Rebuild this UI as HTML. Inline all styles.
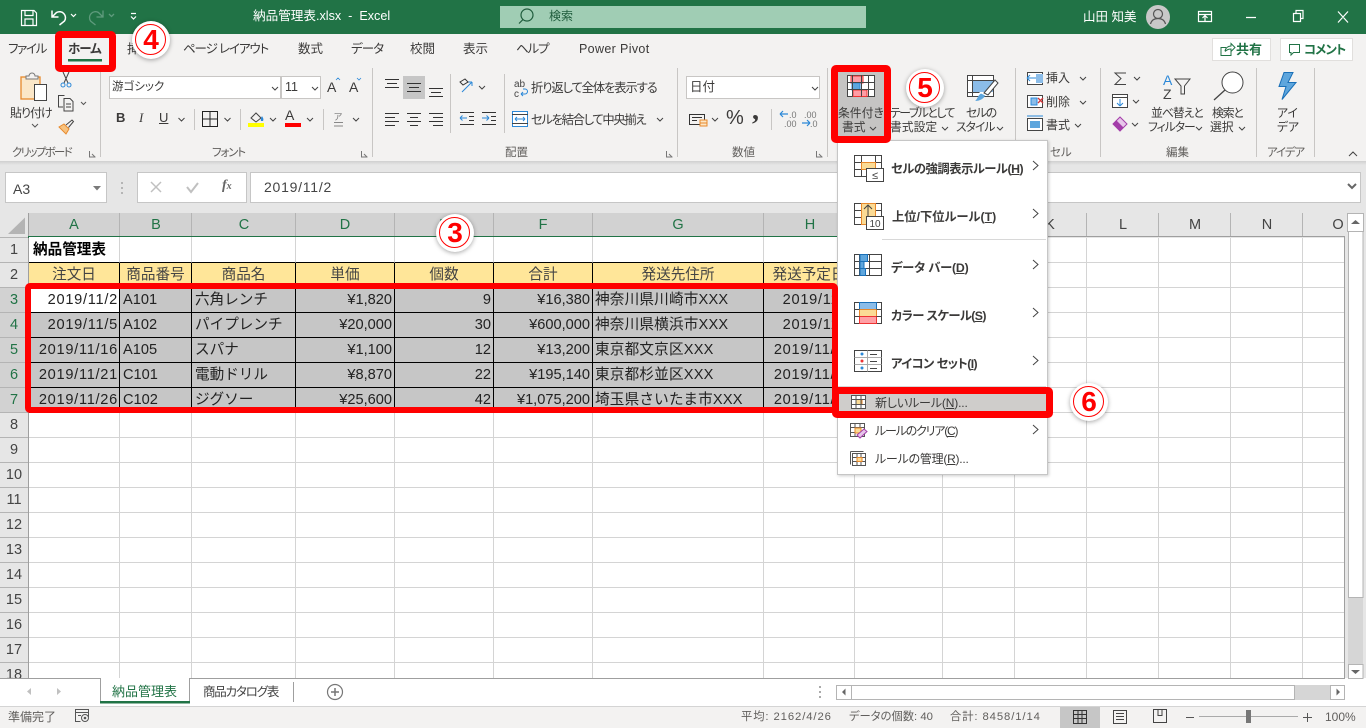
<!DOCTYPE html>
<html lang="ja"><head><meta charset="utf-8"><title>納品管理表.xlsx - Excel</title>
<style>
html,body{margin:0;padding:0;width:1366px;height:728px;overflow:hidden;background:#fff}
body{position:relative;font-family:"Liberation Sans","Noto Sans CJK JP",sans-serif;color:#3b3a39}
div,span,svg,table{position:absolute}
td span,td{position:static}
.t{white-space:nowrap;line-height:20px;font-size:12.5px;font-feature-settings:"palt";color:#3b3a39}
.s{font-size:11.5px;color:#605e5c}
.w{color:#fff}
.b{font-weight:700}
.c{width:40px;text-align:center;font-size:14.5px;line-height:22px;color:#217346}
.g{color:#444}
.n{width:28px;left:0;text-align:center;font-size:14.5px;line-height:24px;color:#444}
.n.a{color:#217346}
.box{background:#fff;border:1px solid #c8c6c4;box-sizing:border-box}
.sep{width:1px;background:#c8c6c4}
.red{border:7px solid #f00;border-radius:5px;box-sizing:border-box}
.o{width:38px;height:38px;border-radius:50%;background:#fff;box-shadow:0 1px 5px rgba(0,0,0,.35);text-align:center;color:#f00;font:700 28px/38px "Liberation Sans",sans-serif}
.o i{position:absolute;left:3px;top:3px;width:29px;height:29px;border:1.5px solid #f00;border-radius:50%}
table{left:29px;top:237px;width:826px;table-layout:fixed;border-collapse:separate;border-spacing:0;font-size:14.6px;color:#222}
td{box-sizing:border-box;height:25px;padding:0 1px 0 3px;border-right:1px solid #000;border-bottom:1px solid #000;white-space:nowrap;overflow:hidden;line-height:22px}
tr.h td{background:#ffe699;text-align:center;padding:0;color:#444}
tr.d td{background:#c6c6c6}
tr.f td{height:26px;border-right-color:#d4d4d4;background:#fff}
td.r{text-align:right;padding-right:2px}
td.dt{text-align:right;letter-spacing:.72px;padding-right:1px}
td.a{letter-spacing:.2px;padding-left:2px}
td.wh{background:#fff!important}
.m{font-size:12.3px}
</style></head><body>

<!-- title bar -->
<div style="left:0;top:0;width:1366px;height:34px;background:#217346"></div>
<div style="left:500px;top:6px;width:366px;height:22px;background:#a0cdb4"></div>
<span class="t" style="left:253px;top:6px;color:#fff;font-size:12.6px">納品管理表.xlsx&nbsp; - &nbsp;Excel</span>
<span class="t" style="left:549px;top:6px;color:#1f5c3c;font-size:12px">検索</span>
<span class="t w" style="left:1083px;top:7px;font-size:12.5px">山田 知美</span>

<!-- ribbon -->
<div style="left:0;top:34px;width:1366px;height:127px;background:#f3f2f1"></div>
<div style="left:0;top:161px;width:1366px;height:52px;background:#e6e6e6"></div>
<div style="left:0;top:161px;width:1366px;height:4px;background:linear-gradient(#cfcfcf,#e6e6e6)"></div>

<span class="t" style="left:8px;top:39px;letter-spacing:-1.3px">ファイル</span>
<span class="t" style="left:183px;top:39px;letter-spacing:-1.1px">ページ レイアウト</span>
<span class="t" style="left:298px;top:39px">数式</span>
<span class="t" style="left:351px;top:39px;letter-spacing:-.9px">データ</span>
<span class="t" style="left:410px;top:39px">校閲</span>
<span class="t" style="left:463px;top:39px">表示</span>
<span class="t" style="left:516px;top:39px;letter-spacing:-1.2px">ヘルプ</span>
<span class="t" style="left:579px;top:39px;letter-spacing:.35px">Power Pivot</span>
<span class="t" style="left:127px;top:39px">挿入</span>

<div class="box" style="left:1212px;top:38px;width:59px;height:23px;border-color:#e1dfdd"></div>
<span class="t b" style="left:1236px;top:40px;color:#217346;font-size:13px">共有</span>
<div class="box" style="left:1280px;top:38px;width:73px;height:23px;border-color:#e1dfdd"></div>
<span class="t b" style="left:1304px;top:40px;color:#217346;font-size:12.5px;letter-spacing:-1px">コメント</span>

<!-- group separators -->
<div class="sep" style="left:100px;top:68px;height:89px"></div>
<div class="sep" style="left:372px;top:68px;height:89px"></div>
<div class="sep" style="left:677px;top:68px;height:89px"></div>
<div class="sep" style="left:827px;top:68px;height:89px"></div>
<div class="sep" style="left:1015px;top:68px;height:89px"></div>
<div class="sep" style="left:1100px;top:68px;height:89px"></div>
<div class="sep" style="left:1256px;top:68px;height:89px"></div>
<div class="sep" style="left:1314px;top:68px;height:89px"></div>
<div class="sep" style="left:194px;top:109px;height:21px"></div>
<div class="sep" style="left:240px;top:109px;height:21px"></div>
<div class="sep" style="left:323px;top:109px;height:21px"></div>
<div class="sep" style="left:504px;top:74px;height:59px"></div>
<div class="sep" style="left:771px;top:109px;height:21px"></div>
<div class="sep" style="left:450px;top:74px;height:59px"></div>

<!-- group labels -->
<span class="t s" style="left:12px;top:143px;letter-spacing:-1.7px">クリップボード</span>
<span class="t s" style="left:212px;top:143px;letter-spacing:-1.2px">フォント</span>
<span class="t s" style="left:505px;top:143px">配置</span>
<span class="t s" style="left:732px;top:143px">数値</span>
<span class="t s" style="left:1050px;top:143px">セル</span>
<span class="t s" style="left:1166px;top:143px">編集</span>
<span class="t s" style="left:1267px;top:143px;letter-spacing:-1.2px">アイデア</span>

<!-- clipboard -->
<span class="t" style="left:10px;top:103px;font-size:12px;letter-spacing:-1px">貼り付け</span>

<!-- font -->
<div class="box" style="left:109px;top:76px;width:172px;height:23px"></div>
<div class="box" style="left:281px;top:76px;width:40px;height:23px"></div>
<span class="t" style="left:112px;top:77px;font-size:11.5px">游ゴシック</span>
<span class="t" style="left:285px;top:77px;font-size:12.5px">11</span>
<span class="t b" style="left:116px;top:108px;font-size:13px">B</span>
<span class="t" style="left:139px;top:108px;font-size:13px;font-style:italic;font-family:'Liberation Serif',serif">I</span>
<span class="t" style="left:159px;top:108px;font-size:13px;text-decoration:underline">U</span>
<span class="t" style="left:327px;top:77px;font-size:14px">A</span>
<span class="t" style="left:349px;top:77px;font-size:14px">A</span>
<span class="t" style="left:285px;top:105px;font-size:14px">A</span>

<!-- alignment / wrap -->
<div style="left:403px;top:76px;width:22px;height:23px;background:#c6c6c6"></div>
<span class="t" style="left:531px;top:78px;font-size:12.3px;letter-spacing:-1.1px">折り返して全体を表示する</span>
<span class="t" style="left:531px;top:110px;font-size:12.3px;letter-spacing:-1.3px">セルを結合して中央揃え</span>

<!-- number -->
<div class="box" style="left:686px;top:76px;width:134px;height:23px"></div>
<span class="t" style="left:690px;top:77px;font-size:12.5px">日付</span>
<span class="t" style="left:726px;top:108px;font-size:20px">%</span>
<span class="t b" style="left:752px;top:101px;font-size:28px;font-family:'Liberation Serif',serif">,</span>

<!-- cond format button -->
<div style="left:838px;top:72px;width:46px;height:65px;background:#c5c4c3"></div>
<span class="t" style="left:838px;top:103px;font-size:11.8px">条件付き</span>
<span class="t" style="left:842px;top:117px;font-size:11.8px">書式</span>
<span class="t" style="left:890px;top:103px;font-size:11.8px;letter-spacing:-1.4px">テーブルとして</span>
<span class="t" style="left:890px;top:117px;font-size:11.8px">書式設定</span>
<span class="t" style="left:966px;top:103px;font-size:11.8px;letter-spacing:-1.2px">セルの</span>
<span class="t" style="left:956px;top:117px;font-size:11.8px;letter-spacing:-1px">スタイル</span>

<!-- cells / editing -->
<span class="t" style="left:1046px;top:68px;font-size:12px">挿入</span>
<span class="t" style="left:1046px;top:92px;font-size:12px">削除</span>
<span class="t" style="left:1046px;top:115px;font-size:12px">書式</span>
<span class="t" style="left:1151px;top:103px;font-size:11.8px;letter-spacing:-1px">並べ替えと</span>
<span class="t" style="left:1148px;top:117px;font-size:11.8px;letter-spacing:-1px">フィルター</span>
<span class="t" style="left:1212px;top:103px;font-size:11.8px;letter-spacing:-1.1px">検索と</span>
<span class="t" style="left:1210px;top:117px;font-size:11.8px">選択</span>
<span class="t" style="left:1277px;top:103px;font-size:11.8px">アイ</span>
<span class="t" style="left:1277px;top:117px;font-size:11.8px">デア</span>

<!-- formula bar -->
<div class="box" style="left:5px;top:172px;width:102px;height:31px;border-color:#c6c6c6"></div>
<span class="t" style="left:13px;top:179px;font-size:14px;color:#444">A3</span>
<div class="box" style="left:137px;top:172px;width:110px;height:31px;border-color:#c6c6c6"></div>
<div class="box" style="left:250px;top:172px;width:1111px;height:31px;border-color:#c6c6c6"></div>
<span class="t" style="left:264px;top:177px;font-size:14px;color:#444;letter-spacing:.75px">2019/11/2</span>
<span class="t" style="left:222px;top:176px;font:italic 700 14px/20px 'Liberation Serif',serif;color:#666">f<span style="position:static;font-size:10px">x</span></span>

<!-- sheet headers -->
<div style="left:0;top:213px;width:1366px;height:465px;background:#e6e6e6"></div>
<div style="left:28px;top:213px;width:810px;height:24px;background:#d2d2d2"></div>
<div style="left:0;top:287px;width:28px;height:125px;background:#d2d2d2"></div>
<div style="left:29px;top:238px;width:1315px;height:440px;background:#fff"></div>

<svg style="left:0;top:0" width="1366" height="728" viewBox="0 0 1366 728" fill="none">
 <!-- grid -->
 <path stroke="#d4d4d4" d="M29 262.5H1344M29 287.5H1344M29 312.5H1344M29 337.5H1344M29 362.5H1344M29 387.5H1344M29 412.5H1344M29 437.5H1344M29 462.5H1344M29 487.5H1344M29 512.5H1344M29 537.5H1344M29 562.5H1344M29 587.5H1344M29 612.5H1344M29 637.5H1344M29 662.5H1344"/>
 <path stroke="#d4d4d4" d="M119.5 238V678M191.5 238V678M295.5 238V678M394.5 238V678M493.5 238V678M592.5 238V678M763.5 238V678M854.5 238V678M942.5 238V678M1014.5 238V678M1086.5 238V678M1158.5 238V678M1230.5 238V678M1302.5 238V678"/>
 <!-- header lines -->
 <path stroke="#b4b4b4" d="M119.5 213V237M191.5 213V237M295.5 213V237M394.5 213V237M493.5 213V237M592.5 213V237M763.5 213V237M1014.5 213V237M1086.5 213V237M1158.5 213V237M1230.5 213V237M1302.5 213V237"/>
 <path stroke="#b4b4b4" d="M0 237.5H28M0 262.5H28M0 287.5H28M0 312.5H28M0 337.5H28M0 362.5H28M0 387.5H28M0 412.5H28M0 437.5H28M0 462.5H28M0 487.5H28M0 512.5H28M0 537.5H28M0 562.5H28M0 587.5H28M0 612.5H28M0 637.5H28M0 662.5H28"/>
 <path stroke="#9f9f9f" d="M28.5 213V678M1344.5 236V678M838 236.5H1344M0 678.5H1345"/>
 <rect x="28" y="236" width="810" height="2" fill="#217346"/>
 <path fill="#b4b4b4" d="M8 234L25 217.500V234z"/>
 <!-- formula bar glyphs -->
 <path fill="#7a7a7a" d="M93 186h8l-4 4.500z"/>
 <path stroke="#b5b5b5" stroke-width="2" stroke-dasharray="2 3" d="M122 182V197"/>
 <path stroke="#c0c0c0" stroke-width="1.500" d="M151 182l10 10M161 182l-10 10"/>
 <path stroke="#c0c0c0" stroke-width="2" d="M187 187l4 5 7-9"/>
 <path stroke="#666" stroke-width="2" d="M1348 184l4 4 4-4"/>
 <!-- scrollbar right -->
 <rect x="1347.500" y="213.500" width="16" height="18" fill="#fff" stroke="#b4b4b4"/>
 <path fill="#666" d="M1351 224l4.500-4 4.500 4z"/>
 <rect x="1348" y="232" width="15" height="432" fill="#d6d6d6"/>
 <rect x="1348.500" y="231.500" width="14.500" height="366" fill="#fff" stroke="#b4b4b4"/>
 <rect x="1348.500" y="664.500" width="14.500" height="14" fill="#fff" stroke="#b4b4b4"/>
 <path fill="#666" d="M1351 670h9l-4.500 4z"/>

 <!-- title bar icons -->
 <g stroke="#fff" stroke-width="1.200">
  <path d="M21.500 10.500h12.500l2.500 2.500v12.500h-15zM25 10.500v5h8v-5M25 25.500v-6.500h8v6.500"/>
  <path stroke-width="1.500" d="M52 10.500v6.500h6.500M52.500 16.500l4-4a6 6 0 0 1 8 8.500l-5 4"/>
  <path d="M71 14l2.500 2.500 2.500-2.500M131 13.500h5M131 16.500l2.500 2.500 2.500-2.500"/>
  <path d="M1198.500 11.500h13v10h-13zM1198.500 14.500h13M1205 21v-5M1202.500 18l2.500-2.500 2.500 2.500M1246 17.500h10M1293.500 13.500h7v8h-7zM1296 13v-2.500h7v8h-2.500M1338 11.500l10 11M1348 11.500l-10 11"/>
 </g>
 <g stroke="#5f9b7d" stroke-width="1.300">
  <path d="M103 10.500v6.500h-6.500M102.500 16.500l-4-4a6 6 0 0 0-8 8.500l5 4"/>
  <path d="M109 14l2.500 2.500 2.500-2.500"/>
 </g>
 <circle cx="1158" cy="17" r="12" fill="#c8c8c8"/>
 <circle cx="1158" cy="14" r="4.500" stroke="#555" stroke-width="1.200"/>
 <path stroke="#555" stroke-width="1.200" d="M1150.500 24c1-4 4-5.500 7.500-5.500s6.500 1.500 7.500 5.500"/>
 <circle cx="527" cy="15" r="6" stroke="#1f5c3c" stroke-width="1.200"/>
 <path stroke="#1f5c3c" stroke-width="1.200" d="M523 19.500l-4 4"/>

 <!-- share / comment -->
 <path stroke="#217346" d="M1226 47.500h-5v8h10v-4M1225 51c.5-3 3-5 6-5v-2.500l4 4-4 4v-2.500c-2.500 0-4.500 1-6 2.500"/>
 <path stroke="#217346" d="M1289.500 44.500h10v8h-6l-2.500 2.500v-2.500h-1.500z"/>

 <!-- home underline -->
 <rect x="68" y="59" width="34" height="2.500" fill="#217346"/>

 <!-- paste -->
 <rect x="21" y="77" width="19" height="22" fill="#fbe7c8" stroke="#e8892b" stroke-width="1.300"/>
 <path stroke="#777" fill="#f3f2f1" d="M26 79v-3h3a3 3 0 0 1 6 0h3v3z"/>
 <rect x="34.500" y="84.500" width="12" height="16" fill="#fff" stroke="#444"/>
 <path stroke="#555" d="M56 102l3 3 3-3" transform="translate(-24 22)"/>
 <!-- scissors -->
 <path stroke="#444" d="M63 72l5 11M69 72l-5 11"/>
 <circle cx="63" cy="85" r="2" stroke="#2b88d8"/><circle cx="69" cy="85" r="2" stroke="#2b88d8"/>
 <!-- copy -->
 <path stroke="#444" d="M63 107h-4.500V95.500h6M64 98.500h6l3 3v9.500h-9zM66 104h5M66 107h5"/>
 <path stroke="#555" d="M81 102l2.500 2.500 2.500-2.500"/>
 <!-- brush -->
 <path fill="#f7c27f" stroke="#e8892b" d="M59 127l5-3 5 5-3 5z"/>
 <path stroke="#444" d="M66 125l6-5 1.500 1.500-5 6"/>

 <!-- chevrons font -->
 <g stroke="#444">
  <path d="M272 87l3 3 3-3M312 87l3 3 3-3M178.500 118l3 3 3-3M224.500 118l3 3 3-3M270 118l3 3 3-3M307 118l3 3 3-3M353 118l3 3 3-3M479 86l3 3 3-3M657 118l3 3 3-3M812 87l3 3 3-3M712 118l3 3 3-3M870 127l3 3 3-3M942 127l3 3 3-3M997 127l3 3 3-3M1080 77l3 3 3-3M1080 101l3 3 3-3M1075 124l3 3 3-3M1134 77l3 3 3-3M1133 100l3 3 3-3M1132 123l3 3 3-3M1196 127l3 3 3-3M1239 127l3 3 3-3M1349 156l4-4 4 4"/>
  <path stroke="#999" d="M1 0" />
 </g>
 <path stroke="#2b88d8" stroke-width=".8" d="M336 80l2-2 2 2M357 78l2 2 2-2"/>
 <path stroke="#222" d="M202.500 111.500h15v15h-15zM210 111v15M202 119h15"/>
 <!-- fill -->
 <path stroke="#444" d="M251 118l5-5 5 5-5 4z"/>
 <path fill="#2b88d8" d="M262 116c1 2 2 3 1 5h-2c-.5-2 0-3 1-5z"/>
 <rect x="248" y="123" width="16" height="4" fill="#ff0"/>
 <rect x="285" y="123" width="16" height="4" fill="#f00"/>
 <path stroke="#888" d="M334 122.500h9M334 126h9"/>
 <text x="338" y="120" font-size="9" fill="#777" text-anchor="middle" font-family="Noto Sans CJK JP">ア</text>

 <!-- alignment icons -->
 <path stroke="#333" d="M385 79.500h14M387 83.500h10M385 87.500h14M407 83.500h14M409 87.500h10M407 91.500h14M429 88.500h14M431 92.500h10M429 96.500h14"/>
 <path stroke="#333" d="M385 113.500h14M385 117.500h10M385 121.500h14M385 125.500h10M407 113.500h14M410 117.500h8M407 121.500h14M410 125.500h8M429 113.500h14M433 117.500h10M429 121.500h14M433 125.500h10"/>
 <path stroke="#2b88d8" d="M462 92l10-10M472 82h-4M472 82v4M460 118h7M460 118l2.500-2.500M460 118l2.500 2.500M482 118h7M489 118l-2.500-2.500M489 118l-2.500 2.500"/>
 <path stroke="#333" d="M460 82l5-3 3 3-5 3zM460 112.500h14M469 116.500h5M469 120.500h5M460 124.500h14M482 112.500h14M491 116.500h5M491 120.500h5M482 124.500h14"/>
 <!-- wrap icon -->
 <text x="514" y="87" font-size="10" fill="#444" font-family="Liberation Sans">ab</text>
 <text x="514" y="97" font-size="10" fill="#444" font-family="Liberation Sans">c</text>
 <path stroke="#2b88d8" d="M521 94h4a2.500 2.500 0 0 0 0-5h-2M521 94l2-2M521 94l2 2"/>
 <!-- merge icon -->
 <rect x="512.500" y="111.500" width="15" height="15" fill="#fff" stroke="#2b88d8"/>
 <path stroke="#444" d="M512 114.500h16M512 123.500h16"/>
 <path stroke="#2b88d8" d="M515 119h10M515 119l2-2M515 119l2 2M525 119l-2-2M525 119l-2 2"/>
 <!-- number icons -->
 <rect x="689.500" y="114.500" width="15" height="10" stroke="#333"/>
 <path stroke="#333" d="M692 117.500h10M692 120.500h5"/>
 <rect x="700" y="120" width="7" height="6" fill="#fbe7c8" stroke="#e8892b"/>
 <path stroke="#e8892b" d="M700 123h7"/>
 <text x="789" y="118" font-size="9" fill="#777" font-family="Liberation Sans">.0</text>
 <text x="784" y="127" font-size="9" fill="#777" font-family="Liberation Sans">.00</text>
 <text x="804" y="118" font-size="9" fill="#777" font-family="Liberation Sans">.00</text>
 <text x="810" y="127" font-size="9" fill="#777" font-family="Liberation Sans">.0</text>
 <path stroke="#2b88d8" stroke-width="1.200" d="M780 114h8M780 114l3-3M780 114l3 3M802 123h8M810 123l-3-3M810 123l-3 3"/>

 <!-- cond format icon -->
 <rect x="847.500" y="75.500" width="27" height="21" fill="#fff" stroke="#444"/>
 <rect x="851" y="76" width="12" height="7" fill="#ff9da5" stroke="#e33"/>
 <rect x="852" y="83" width="8" height="7" fill="#5ea6dd" stroke="#2b88d8"/>
 <rect x="853" y="90" width="14" height="6.500" fill="#ff9da5" stroke="#e33"/>
 <path stroke="#444" d="M847.500 82.500h27M847.500 89.500h27M852.500 75.500v21M861.500 75.500v21M868.500 75.500v21"/>

 <!-- cell style -->
 <rect x="967.500" y="75.500" width="26" height="21" fill="#fff" stroke="#444"/>
 <rect x="972" y="80" width="21" height="12" fill="#8bbce8"/>
 <path stroke="#444" d="M967.500 80.500h26M967.500 92.500h12M972.500 75.500v21"/>
 <path stroke="#444" fill="#fff" d="M984 93l11-13 3 3-10 12z"/>
 <path fill="#5ea6dd" d="M975 101c2-1 3-6 6-7.500l4 2c-1 3-5 5.500-10 5.500z"/>

 <!-- cells group -->
 <rect x="1027.500" y="72.500" width="15" height="12" fill="#fff" stroke="#444"/>
 <path stroke="#2b88d8" d="M1027 78h10M1027 78l3-3M1027 78l3 3"/><rect x="1036" y="74" width="7" height="9" fill="#8bbce8"/>
 <rect x="1027.500" y="95.500" width="15" height="12" fill="#fff" stroke="#444"/>
 <rect x="1031" y="98" width="6" height="7" fill="#8bbce8" stroke="#2b88d8"/>
 <path stroke="#d13438" stroke-width="1.300" d="M1038 98l5 5M1043 98l-5 5"/>
 <rect x="1027.500" y="118.500" width="15" height="12" fill="#fff" stroke="#444"/>
 <rect x="1030" y="121" width="10" height="7" fill="#5ea6dd"/>
 <path stroke="#2b88d8" d="M1027 116h16"/>
 <!-- edit group -->
 <path stroke="#444" d="M1126 73h-11l6 5.500-6 6h11"/>
 <rect x="1112.500" y="94.500" width="15" height="13" fill="#fff" stroke="#444"/>
 <path stroke="#444" d="M1112 97.500h16"/>
 <path stroke="#2b88d8" d="M1120 99v7M1120 106l-3-3M1120 106l3-3"/>
 <path fill="#e7c6ea" stroke="#a33da9" d="M1113 124l7-7 7 7-7 7z"/>
 <path fill="#a33da9" d="M1113 124l3.500-3.500 7 7-3.500 3.500z"/>
 <!-- sort -->
 <text x="1163" y="85" font-size="14" fill="#2b88d8" font-family="Liberation Sans">A</text>
 <text x="1163" y="99" font-size="14" fill="#444" font-family="Liberation Sans">Z</text>
 <path stroke="#444" d="M1175 79h15l-5.500 7v8l-3.500 0v-8z"/>
 <!-- find -->
 <circle cx="1232.500" cy="82.500" r="10.500" stroke="#444" fill="#fff"/>
 <path stroke="#444" stroke-width="1.300" d="M1225 90l-11 10"/>
 <!-- ideas -->
 <path fill="#5ea6dd" stroke="#1a70b8" d="M1284 72.500h9l-5 10h8l-14 17 4-13h-7z"/>

 <!-- launchers -->
 <path stroke="#777" d="M89.500 151v6h6M92 154l3 3M361.500 151v6h6M364 154l3 3M666.500 151v6h6M669 154l3 3M816.500 151v6h6M819 154l3 3"/>

 <!-- tabs -->
 <rect x="100" y="678" width="89" height="24" fill="#fff"/>
 <path stroke="#9f9f9f" d="M100.500 678v24M189.500 678v24M293.500 682v20"/>
 <rect x="100" y="701" width="90" height="2.500" fill="#217346"/>
 <path fill="#c0c0c0" d="M31 688v7l-4-3.500zM57 688v7l4-3.500z"/>
 <circle cx="335" cy="692" r="7.500" stroke="#777" stroke-width="1.200"/>
 <path stroke="#777" stroke-width="1.500" d="M331 692h8M335 688v8"/>
 <!-- h scroll -->
 <path stroke="#aaa" stroke-width="2" stroke-dasharray="2 3" d="M820 686V700"/>
 <rect x="836.500" y="685" width="508" height="15" fill="#d6d6d6"/>
 <rect x="851.500" y="685.500" width="443" height="14" fill="#fff" stroke="#b4b4b4"/>
 <rect x="836.500" y="685.500" width="15" height="14" fill="#fff" stroke="#b4b4b4"/>
 <rect x="1330.500" y="685.500" width="14" height="14" fill="#fff" stroke="#b4b4b4"/>
 <path fill="#666" d="M845.500 688.500v7l-3.500-3.500zM1336.500 688.500v7l3.500-3.500z"/>
</svg>

<!-- column letters -->
<span class="c" style="left:54px;top:214px">A</span>
<span class="c" style="left:136px;top:214px">B</span>
<span class="c" style="left:224px;top:214px">C</span>
<span class="c" style="left:325px;top:214px">D</span>
<span class="c" style="left:424px;top:214px">E</span>
<span class="c" style="left:523px;top:214px">F</span>
<span class="c" style="left:658px;top:214px">G</span>
<span class="c" style="left:790px;top:214px">H</span>
<span class="c g" style="left:1030px;top:214px">K</span>
<span class="c g" style="left:1103px;top:214px">L</span>
<span class="c g" style="left:1175px;top:214px">M</span>
<span class="c g" style="left:1247px;top:214px">N</span>
<span class="c g" style="left:1318px;top:214px">O</span>

<!-- row numbers -->
<span class="n" style="top:238px">1</span><span class="n" style="top:263px">2</span>
<span class="n a" style="top:288px">3</span><span class="n a" style="top:313px">4</span><span class="n a" style="top:338px">5</span><span class="n a" style="top:363px">6</span><span class="n a" style="top:388px">7</span>
<span class="n" style="top:413px">8</span><span class="n" style="top:438px">9</span><span class="n" style="top:463px">10</span><span class="n" style="top:488px">11</span><span class="n" style="top:513px">12</span><span class="n" style="top:538px">13</span><span class="n" style="top:563px">14</span><span class="n" style="top:588px">15</span><span class="n" style="top:613px">16</span><span class="n" style="top:638px">17</span><span class="n" style="top:663px;height:15px;overflow:hidden">18</span>

<!-- data -->
<table>
<colgroup><col style="width:91px"><col style="width:72px"><col style="width:104px"><col style="width:99px"><col style="width:99px"><col style="width:99px"><col style="width:171px"><col style="width:91px"></colgroup>
<tr class="f"><td class="b" style="color:#000;padding-left:4px">納品管理表</td><td></td><td></td><td></td><td></td><td></td><td></td><td></td></tr>
<tr class="h"><td>注文日</td><td>商品番号</td><td>商品名</td><td>単価</td><td>個数</td><td>合計</td><td>発送先住所</td><td>発送予定日</td></tr>
<tr class="d"><td class="dt wh">2019/11/2</td><td>A101</td><td>六角レンチ</td><td class="r">¥1,820</td><td class="r">9</td><td class="r">¥16,380</td><td class="a">神奈川県川崎市XXX</td><td class="dt">2019/11/5</td></tr>
<tr class="d"><td class="dt">2019/11/5</td><td>A102</td><td>パイプレンチ</td><td class="r">¥20,000</td><td class="r">30</td><td class="r">¥600,000</td><td class="a">神奈川県横浜市XXX</td><td class="dt">2019/11/8</td></tr>
<tr class="d"><td class="dt">2019/11/16</td><td>A105</td><td>スパナ</td><td class="r">¥1,100</td><td class="r">12</td><td class="r">¥13,200</td><td class="a">東京都文京区XXX</td><td class="dt">2019/11/19</td></tr>
<tr class="d"><td class="dt">2019/11/21</td><td>C101</td><td>電動ドリル</td><td class="r">¥8,870</td><td class="r">22</td><td class="r">¥195,140</td><td class="a">東京都杉並区XXX</td><td class="dt">2019/11/24</td></tr>
<tr class="d"><td class="dt">2019/11/26</td><td>C102</td><td>ジグソー</td><td class="r">¥25,600</td><td class="r">42</td><td class="r">¥1,075,200</td><td class="a">埼玉県さいたま市XXX</td><td class="dt">2019/11/29</td></tr>
</table>

<!-- tabs text -->
<span class="t" style="left:112px;top:682px;font-size:13px;color:#217346;font-feature-settings:normal">納品管理表</span>
<span class="t" style="left:203px;top:682px;font-size:12.5px;color:#444;letter-spacing:-1.2px">商品カタログ表</span>

<!-- status bar -->
<div style="left:0;top:706px;width:1366px;height:22px;background:#f3f2f1;border-top:1px solid #d4d4d4;box-sizing:border-box"></div>
<div style="left:1060px;top:707px;width:40px;height:21px;background:#c6c6c6"></div>
<span class="t s" style="left:8px;top:707px;font-size:12px">準備完了</span>
<span class="t s" style="left:741px;top:707px;font-size:11.3px;letter-spacing:.9px">平均: 2162/4/26</span>
<span class="t s" style="left:849px;top:707px;font-size:11.3px">データの個数: 40</span>
<span class="t s" style="left:950px;top:707px;font-size:11.3px;letter-spacing:.9px">合計: 8458/1/14</span>
<span class="t s" style="left:1325px;top:707px;font-size:12px">100%</span>
<svg style="left:0;top:700px" width="1366" height="28" viewBox="0 700 1366 28" fill="none">
 <path stroke="#555" d="M88.500 717v-7.500h-13v12h5M75.500 712.500h13M78 715.500h3"/>
 <circle cx="85" cy="718" r="3.500" stroke="#555"/><circle cx="85" cy="718" r="1.300" fill="#555"/>
 <path stroke="#333" d="M1073.500 710.500h13v13h-13zM1073.500 714.500h13M1073.500 718.500h13M1078 710.500v13M1082 710.500v13"/>
 <path stroke="#444" d="M1113.500 710.500h13v13h-13zM1116 713.500h8M1116 716.500h8M1116 719.500h8M1153.500 709.500h13v13h-13zM1158 709.500v6h4v-6"/>
 <path stroke="#555" d="M1186 717.500h8M1303 717.500h9M1307.500 713v9"/>
 <path stroke="#aaa" d="M1199 716.500h99"/>
 <rect x="1246" y="710" width="5" height="13" fill="#777"/>
</svg>

<!-- conditional format menu -->
<div style="left:837px;top:140px;width:211px;height:335px;background:#fff;border:1px solid #c6c6c6;box-sizing:border-box;box-shadow:1px 1px 3px rgba(0,0,0,.2)"></div>
<div style="left:882px;top:239px;width:164px;height:1px;background:#d8d8d8"></div>
<div style="left:838px;top:386px;width:208px;height:1px;background:#d8d8d8"></div>
<div style="left:838px;top:393px;width:208px;height:19px;background:#cfcdcb"></div>
<span class="t b m" style="left:891px;top:159px;letter-spacing:-.45px">セルの強調表示ルール(<u>H</u>)</span>
<span class="t b m" style="left:892px;top:207px">上位/下位ルール(<u>T</u>)</span>
<span class="t b m" style="left:891px;top:258px;letter-spacing:-.2px">データ バー(<u>D</u>)</span>
<span class="t b m" style="left:891px;top:306px;letter-spacing:-.6px">カラー スケール(<u>S</u>)</span>
<span class="t b m" style="left:891px;top:354px;letter-spacing:-.6px">アイコン セット(<u>I</u>)</span>
<span class="t m" style="left:875px;top:393px;font-size:12px;letter-spacing:-.15px">新しいルール(<u>N</u>)...</span>
<span class="t m" style="left:875px;top:421px;font-size:12px;letter-spacing:-1.2px">ルールのクリア(<u>C</u>)</span>
<span class="t m" style="left:875px;top:449px;font-size:12px;letter-spacing:-.25px">ルールの管理(<u>R</u>)...</span>
<svg style="left:0;top:0" width="1366" height="728" viewBox="0 0 1366 728" fill="none">
 <!-- item 1 -->
 <g stroke="#444">
  <rect x="854.500" y="155.500" width="27" height="21" fill="#fff"/>
  <path d="M854.500 162.500h27M854.500 169.500h27M861.500 155.500v21M875.500 155.500v21"/>
  <rect x="861.500" y="162.500" width="14" height="7" fill="#fbdb95" stroke="#e8892b"/>
  <rect x="866.500" y="168.500" width="17" height="13" fill="#fff"/>
 </g>
 <text x="875" y="179" font-size="11" fill="#444" text-anchor="middle" font-family="Liberation Sans">≤</text>
 <!-- item 2 -->
 <g stroke="#444">
  <rect x="854.500" y="203.500" width="27" height="21" fill="#fff"/>
  <path d="M854.500 210.500h27M854.500 217.500h27M861.500 203.500v21M875.500 203.500v21"/>
  <rect x="861.500" y="203.500" width="14" height="21" fill="#fbdb95" stroke="#e8892b"/>
  <path d="M868 218v-13M864 209l4-4 4 4"/>
  <rect x="866.500" y="216.500" width="17" height="13" fill="#fff"/>
 </g>
 <text x="875" y="227" font-size="10" fill="#444" text-anchor="middle" font-family="Liberation Sans">10</text>
 <!-- item 3 -->
 <rect x="854.500" y="254.500" width="27" height="21" fill="#fff" stroke="#444"/>
 <path stroke="#444" d="M854.500 261.500h27M854.500 268.500h27M859.500 254.500v21M869.500 254.500v21"/>
 <rect x="860" y="254.500" width="7.500" height="7" fill="#5ea6dd" stroke="#1a70b8"/>
 <rect x="860" y="261.500" width="4" height="7" fill="#5ea6dd" stroke="#1a70b8"/>
 <rect x="860" y="268.500" width="5.500" height="7" fill="#5ea6dd" stroke="#1a70b8"/>
 <!-- item 4 -->
 <rect x="854.500" y="302.500" width="27" height="21" fill="#fff" stroke="#444"/>
 <rect x="859.500" y="302.500" width="17" height="7" fill="#8bbce8" stroke="#1a70b8"/>
 <rect x="859.500" y="309.500" width="17" height="7" fill="#fbdb95" stroke="#e8892b"/>
 <rect x="859.500" y="316.500" width="17" height="7" fill="#ffa0a5" stroke="#e33"/>
 <path stroke="#444" d="M854.500 309.500h5M854.500 316.500h5M876.500 309.500h5M876.500 316.500h5"/>
 <!-- item 5 -->
 <rect x="854.500" y="350.500" width="27" height="21" fill="#fff" stroke="#444"/>
 <path stroke="#aaa" d="M854.500 357.500h27M854.500 364.500h27M867.500 350.500v21"/>
 <path stroke="#444" d="M870 354.500h7M870 361.500h7M870 368.500h7"/>
 <circle cx="862" cy="354" r="1.500" fill="#2b88d8"/><circle cx="862" cy="361" r="1.500" fill="#e33"/><circle cx="862" cy="368" r="1.500" fill="#2b88d8"/>
 <!-- lower icons -->
 <rect x="851.500" y="395.500" width="14" height="13" fill="#fff" stroke="#555"/>
 <rect x="856" y="399.500" width="6" height="5" fill="#fbdb95" stroke="#e8892b"/>
 <path stroke="#555" d="M851.500 399.500h14M851.500 404.500h14M856 395.500v13M861 395.500v13"/>
 <rect x="850.500" y="423.500" width="14" height="13" fill="#fff" stroke="#555"/>
 <path stroke="#555" d="M850.500 427.500h14M850.500 432.500h14M855 423.500v13M860 423.500v13"/>
 <rect x="855" y="428" width="6" height="5" fill="#fbdb95" stroke="#e8892b"/>
 <path fill="#e7c6ea" stroke="#a33da9" d="M857 435l7-6 3 2.500-7 6.500z"/>
 <path stroke="#555" d="M850.500 451.500h13M850.500 451.500v13"/>
 <rect x="852.500" y="453.500" width="13" height="12" fill="#fff" stroke="#555"/>
 <path stroke="#555" d="M852.500 457.500h13M852.500 461.500h13M857 453.500v12M861 453.500v12"/>
 <rect x="857" y="457.500" width="5" height="4" fill="#fbdb95" stroke="#e8892b"/>
 <!-- menu chevrons -->
 <path stroke="#444" d="M1033 161l5 4.500-5 4.500M1033 209l5 4.500-5 4.500M1033 260l5 4.500-5 4.500M1033 308l5 4.500-5 4.500M1033 356l5 4.500-5 4.500M1033 425l5 4.500-5 4.500"/>
</svg>

<!-- red annotation boxes -->
<div class="red" style="left:25px;top:283px;width:813px;height:130px;border-width:6.500px"></div>
<div class="red" style="left:55px;top:31px;width:61px;height:41px"></div>
<span class="t b" style="left:68px;top:39px;font-size:12.5px;letter-spacing:-1px">ホーム</span>
<div class="red" style="left:831px;top:65px;width:60px;height:78px"></div>
<div class="red" style="left:832px;top:387px;width:221px;height:31px"></div>

<!-- numbered callouts -->
<div class="o" style="left:132px;top:21px"><i></i>4</div>
<div class="o" style="left:906px;top:69px"><i></i>5</div>
<div class="o" style="left:436px;top:214px"><i></i>3</div>
<div class="o" style="left:1070px;top:383px"><i></i>6</div>

</body></html>
